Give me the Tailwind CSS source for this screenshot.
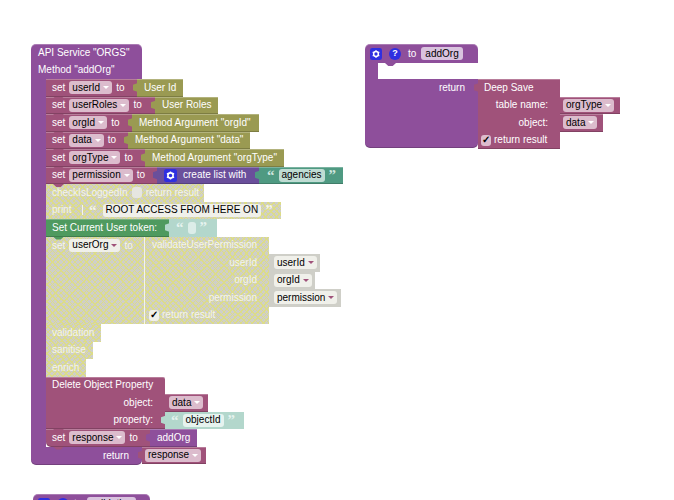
<!DOCTYPE html>
<html lang="en">
<head>
    <meta charset="UTF-8">
    <meta name="viewport" content="width=device-width, initial-scale=1.0">
    <title>Blocks</title>
    <script src="https://cdn.jsdelivr.net/npm/@tailwindcss/browser@4"></script>
</head>
<body class="bg-white">
<div class="relative w-[674px] h-[500px] overflow-hidden font-['Liberation_Sans',Arial,sans-serif] text-[10px] leading-none text-white whitespace-nowrap">

    <!-- API service block -->
    <div class="absolute left-[31px] top-[44px] w-[176px]">
        <div class="w-[111px] h-[35px] bg-[#8e4f9b] rounded-t-[5px] pl-[7px] flex flex-col shadow-[inset_0_1px_0_#ffffff40]">
            <div class="h-[17.5px] flex items-center">API Service "ORGS"</div>
            <div class="h-[17.5px] flex items-center">Method "addOrg"</div>
        </div>
        <div class="flex">
            <div class="w-[15px] shrink-0 bg-[#8e4f9b]"></div>
            <div class="flex flex-col">

                <!-- set userId -->
                <div class="flex h-[17.5px]">
                    <div class="relative w-[91px] flex items-center gap-[4px] pl-[6px] bg-[#a0527a] shadow-[inset_0_1px_0_#ffffff40,inset_0_-1px_0_#00000030]">
                        <span>set</span>
                        <span class="flex items-center gap-[3px] h-[13px] px-[3px] rounded-[3px] bg-[#dcbccd] text-black">userId<i class="w-0 h-0 border-x-[3px] border-t-[3px] border-x-transparent border-t-white"></i></span>
                        <span>to</span>
                        <i class="absolute left-[7px] top-full z-10 w-[11px] h-[3px] bg-[#a0527a] [clip-path:polygon(0_0,100%_0,70%_100%,30%_100%)]"></i>
                    </div>
                    <div class="relative w-[46px] flex items-center pl-[7px] bg-[#9a9a52] shadow-[inset_0_1px_0_#ffffff40,inset_0_-1px_0_#00000030]">
                        User Id
                        <i class="absolute -left-[4px] top-[4px] w-[5px] h-[9px] bg-[#9a9a52] [clip-path:polygon(0_20%,100%_0,100%_100%,0_80%)]"></i>
                    </div>
                </div>
                <!-- set userRoles -->
                <div class="flex h-[17.5px]">
                    <div class="relative w-[109px] flex items-center gap-[4px] pl-[6px] bg-[#a0527a] shadow-[inset_0_1px_0_#ffffff40,inset_0_-1px_0_#00000030]">
                        <span>set</span>
                        <span class="flex items-center gap-[3px] h-[13px] px-[3px] rounded-[3px] bg-[#dcbccd] text-black">userRoles<i class="w-0 h-0 border-x-[3px] border-t-[3px] border-x-transparent border-t-white"></i></span>
                        <span>to</span>
                        <i class="absolute left-[7px] top-full z-10 w-[11px] h-[3px] bg-[#a0527a] [clip-path:polygon(0_0,100%_0,70%_100%,30%_100%)]"></i>
                    </div>
                    <div class="relative w-[63px] flex items-center pl-[7px] bg-[#9a9a52] shadow-[inset_0_1px_0_#ffffff40,inset_0_-1px_0_#00000030]">
                        User Roles
                        <i class="absolute -left-[4px] top-[4px] w-[5px] h-[9px] bg-[#9a9a52] [clip-path:polygon(0_20%,100%_0,100%_100%,0_80%)]"></i>
                    </div>
                </div>
                <!-- set orgId -->
                <div class="flex h-[17.5px]">
                    <div class="relative w-[86px] flex items-center gap-[4px] pl-[6px] bg-[#a0527a] shadow-[inset_0_1px_0_#ffffff40,inset_0_-1px_0_#00000030]">
                        <span>set</span>
                        <span class="flex items-center gap-[3px] h-[13px] px-[3px] rounded-[3px] bg-[#dcbccd] text-black">orgId<i class="w-0 h-0 border-x-[3px] border-t-[3px] border-x-transparent border-t-white"></i></span>
                        <span>to</span>
                        <i class="absolute left-[7px] top-full z-10 w-[11px] h-[3px] bg-[#a0527a] [clip-path:polygon(0_0,100%_0,70%_100%,30%_100%)]"></i>
                    </div>
                    <div class="relative w-[127px] flex items-center pl-[7px] bg-[#9a9a52] shadow-[inset_0_1px_0_#ffffff40,inset_0_-1px_0_#00000030]">
                        Method Argument "orgId"
                        <i class="absolute -left-[4px] top-[4px] w-[5px] h-[9px] bg-[#9a9a52] [clip-path:polygon(0_20%,100%_0,100%_100%,0_80%)]"></i>
                    </div>
                </div>
                <!-- set data -->
                <div class="flex h-[17.5px]">
                    <div class="relative w-[82px] flex items-center gap-[4px] pl-[6px] bg-[#a0527a] shadow-[inset_0_1px_0_#ffffff40,inset_0_-1px_0_#00000030]">
                        <span>set</span>
                        <span class="flex items-center gap-[3px] h-[13px] px-[3px] rounded-[3px] bg-[#dcbccd] text-black">data<i class="w-0 h-0 border-x-[3px] border-t-[3px] border-x-transparent border-t-white"></i></span>
                        <span>to</span>
                        <i class="absolute left-[7px] top-full z-10 w-[11px] h-[3px] bg-[#a0527a] [clip-path:polygon(0_0,100%_0,70%_100%,30%_100%)]"></i>
                    </div>
                    <div class="relative w-[122px] flex items-center pl-[7px] bg-[#9a9a52] shadow-[inset_0_1px_0_#ffffff40,inset_0_-1px_0_#00000030]">
                        Method Argument "data"
                        <i class="absolute -left-[4px] top-[4px] w-[5px] h-[9px] bg-[#9a9a52] [clip-path:polygon(0_20%,100%_0,100%_100%,0_80%)]"></i>
                    </div>
                </div>
                <!-- set orgType -->
                <div class="flex h-[17.5px]">
                    <div class="relative w-[99px] flex items-center gap-[4px] pl-[6px] bg-[#a0527a] shadow-[inset_0_1px_0_#ffffff40,inset_0_-1px_0_#00000030]">
                        <span>set</span>
                        <span class="flex items-center gap-[3px] h-[13px] px-[3px] rounded-[3px] bg-[#dcbccd] text-black">orgType<i class="w-0 h-0 border-x-[3px] border-t-[3px] border-x-transparent border-t-white"></i></span>
                        <span>to</span>
                        <i class="absolute left-[7px] top-full z-10 w-[11px] h-[3px] bg-[#a0527a] [clip-path:polygon(0_0,100%_0,70%_100%,30%_100%)]"></i>
                    </div>
                    <div class="relative w-[139px] flex items-center pl-[7px] bg-[#9a9a52] shadow-[inset_0_1px_0_#ffffff40,inset_0_-1px_0_#00000030]">
                        Method Argument "orgType"
                        <i class="absolute -left-[4px] top-[4px] w-[5px] h-[9px] bg-[#9a9a52] [clip-path:polygon(0_20%,100%_0,100%_100%,0_80%)]"></i>
                    </div>
                </div>
                <!-- set permission -->
                <div class="flex h-[17.5px]">
                    <div class="relative w-[111px] flex items-center gap-[4px] pl-[6px] bg-[#a0527a] shadow-[inset_0_1px_0_#ffffff40,inset_0_-1px_0_#00000030]">
                        <span>set</span>
                        <span class="flex items-center gap-[3px] h-[13px] px-[3px] rounded-[3px] bg-[#dcbccd] text-black">permission<i class="w-0 h-0 border-x-[3px] border-t-[3px] border-x-transparent border-t-white"></i></span>
                        <span>to</span>
                        <i class="absolute left-[7px] top-full z-10 w-[11px] h-[3px] bg-[#a0527a] [clip-path:polygon(0_0,100%_0,70%_100%,30%_100%)]"></i>
                    </div>
                    <div class="relative w-[102px] flex items-center gap-[6px] pl-[7px] bg-[#6a4f9b] shadow-[inset_0_1px_0_#ffffff40,inset_0_-1px_0_#00000030]">
                        <svg width="13" height="13" viewBox="0 0 13 13" class="shrink-0"><rect width="13" height="13" rx="2.5" fill="#2f2fe0"/><circle cx="6.5" cy="6.5" r="2.6" fill="none" stroke="#fff" stroke-width="1.6"/><path d="M6.5 2.4v1.4M6.5 9.2v1.4M2.9 4.4l1.2.7M8.9 7.9l1.2.7M2.9 8.6l1.2-.7M8.9 5.1l1.2-.7" stroke="#fff" stroke-width="1.4"/></svg>
                        create list with
                        <i class="absolute -left-[4px] top-[4px] w-[5px] h-[9px] bg-[#6a4f9b] [clip-path:polygon(0_20%,100%_0,100%_100%,0_80%)]"></i>
                    </div>
                    <div class="relative w-[84px] flex items-center gap-[4px] pl-[8px] bg-[#4f9a82] shadow-[inset_0_1px_0_#ffffff40,inset_0_-1px_0_#00000030]">
                        <span class="font-['Liberation_Serif',serif] font-bold text-[15px] leading-[9px] h-[9px] text-[#cfe6df]">“</span>
                        <span class="flex items-center h-[13px] px-[3px] rounded-[3px] bg-[#bfdcd3] text-black">agencies</span>
                        <span class="font-['Liberation_Serif',serif] font-bold text-[15px] leading-[9px] h-[9px] text-[#cfe6df]">”</span>
                        <i class="absolute -left-[4px] top-[4px] w-[5px] h-[9px] bg-[#4f9a82] [clip-path:polygon(0_20%,100%_0,100%_100%,0_80%)]"></i>
                    </div>
                </div>
                <!-- checkIsLoggedIn (disabled) -->
                <div class="flex h-[17.5px]">
                    <div class="w-[158px] flex items-center gap-[4px] pl-[6px] text-[#f4f4ec] bg-[#cfcfc8] bg-[repeating-linear-gradient(45deg,#dcdc88_0,#dcdc88_1px,transparent_1px,transparent_4px),repeating-linear-gradient(-45deg,#dcdc88_0,#dcdc88_1px,transparent_1px,transparent_4px)]">
                        <span>checkIsLoggedIn</span>
                        <span class="w-[10px] h-[11px] rounded-[3px] bg-[#e6e6e0]"></span>
                        <span>return result</span>
                    </div>
                </div>
                <!-- print (disabled) -->
                <div class="flex h-[17.5px]">
                    <div class="w-[235px] flex items-center pl-[6px] text-[#f4f4ec] bg-[#cfcfc8] bg-[repeating-linear-gradient(45deg,#dcdc88_0,#dcdc88_1px,transparent_1px,transparent_4px),repeating-linear-gradient(-45deg,#dcdc88_0,#dcdc88_1px,transparent_1px,transparent_4px)]">
                        <span class="w-[31px] shrink-0 border-r border-[#f4f4ec]">print</span>
                        <span class="font-['Liberation_Serif',serif] font-bold text-[15px] leading-[9px] h-[9px] ml-[6px]">“</span>
                        <span class="flex items-center h-[13px] px-[3px] ml-[6px] rounded-[3px] bg-[#f0f0ea] text-black">ROOT ACCESS FROM HERE ON</span>
                        <span class="font-['Liberation_Serif',serif] font-bold text-[15px] leading-[9px] h-[9px] ml-[4px]">”</span>
                    </div>
                </div>
                <!-- Set Current User token -->
                <div class="flex h-[17.5px]">
                    <div class="relative w-[123px] flex items-center pl-[6px] bg-[#4f9a5f] shadow-[inset_0_1px_0_#ffffff40,inset_0_-1px_0_#00000030]">
                        Set Current User token:
                        <i class="absolute left-[7px] top-full z-10 w-[11px] h-[3px] bg-[#4f9a5f] [clip-path:polygon(0_0,100%_0,70%_100%,30%_100%)]"></i>
                    </div>
                    <div class="relative w-[48px] flex items-center gap-[4px] pl-[7px] bg-[#b3d7cc]">
                        <span class="font-['Liberation_Serif',serif] font-bold text-[15px] leading-[9px] h-[9px] text-[#e6f3ef]">“</span>
                        <span class="w-[8px] h-[12px] rounded-[3px] bg-[#dcede8]"></span>
                        <span class="font-['Liberation_Serif',serif] font-bold text-[15px] leading-[9px] h-[9px] text-[#e6f3ef]">”</span>
                        <i class="absolute -left-[4px] top-[4px] w-[5px] h-[9px] bg-[#b3d7cc] [clip-path:polygon(0_20%,100%_0,100%_100%,0_80%)]"></i>
                    </div>
                </div>
                <!-- set userOrg (disabled) -->
                <div class="flex">
                    <div class="w-[99px] h-[87.5px] flex items-start gap-[4px] pt-[2px] pl-[6px] border-r border-[#f4f4ec] text-[#f4f4ec] bg-[#cfcfc8] bg-[repeating-linear-gradient(45deg,#dcdc88_0,#dcdc88_1px,transparent_1px,transparent_4px),repeating-linear-gradient(-45deg,#dcdc88_0,#dcdc88_1px,transparent_1px,transparent_4px)]">
                        <span class="leading-[13px]">set</span>
                        <span class="flex items-center gap-[3px] h-[13px] px-[3px] rounded-[3px] bg-[#f0f0ea] text-black">userOrg<i class="w-0 h-0 border-x-[3px] border-t-[3px] border-x-transparent border-t-[#a0527a]"></i></span>
                        <span class="leading-[13px]">to</span>
                    </div>
                    <div class="flex flex-col">
                        <div class="w-[124px] h-[17.5px] flex items-center pl-[7px] text-[#f4f4ec] bg-[#cfcfc8] bg-[repeating-linear-gradient(45deg,#dcdc88_0,#dcdc88_1px,transparent_1px,transparent_4px),repeating-linear-gradient(-45deg,#dcdc88_0,#dcdc88_1px,transparent_1px,transparent_4px)]">validateUserPermission</div>
                        <div class="flex h-[17.5px]">
                            <div class="w-[124px] flex items-center justify-end pr-[12px] text-[#f4f4ec] bg-[#cfcfc8] bg-[repeating-linear-gradient(45deg,#dcdc88_0,#dcdc88_1px,transparent_1px,transparent_4px),repeating-linear-gradient(-45deg,#dcdc88_0,#dcdc88_1px,transparent_1px,transparent_4px)]">userId</div>
                            <div class="w-[51px] flex items-center pl-[5px] bg-[#cfcfc8]">
                                <span class="flex items-center gap-[3px] h-[13px] px-[3px] rounded-[3px] bg-[#f0f0ea] text-black">userId<i class="w-0 h-0 border-x-[3px] border-t-[3px] border-x-transparent border-t-[#a0527a]"></i></span>
                            </div>
                        </div>
                        <div class="flex h-[17.5px]">
                            <div class="w-[124px] flex items-center justify-end pr-[12px] text-[#f4f4ec] bg-[#cfcfc8] bg-[repeating-linear-gradient(45deg,#dcdc88_0,#dcdc88_1px,transparent_1px,transparent_4px),repeating-linear-gradient(-45deg,#dcdc88_0,#dcdc88_1px,transparent_1px,transparent_4px)]">orgId</div>
                            <div class="w-[46px] flex items-center pl-[5px] bg-[#cfcfc8]">
                                <span class="flex items-center gap-[3px] h-[13px] px-[3px] rounded-[3px] bg-[#f0f0ea] text-black">orgId<i class="w-0 h-0 border-x-[3px] border-t-[3px] border-x-transparent border-t-[#a0527a]"></i></span>
                            </div>
                        </div>
                        <div class="flex h-[17.5px]">
                            <div class="w-[124px] flex items-center justify-end pr-[12px] text-[#f4f4ec] bg-[#cfcfc8] bg-[repeating-linear-gradient(45deg,#dcdc88_0,#dcdc88_1px,transparent_1px,transparent_4px),repeating-linear-gradient(-45deg,#dcdc88_0,#dcdc88_1px,transparent_1px,transparent_4px)]">permission</div>
                            <div class="w-[72px] flex items-center pl-[5px] bg-[#cfcfc8]">
                                <span class="flex items-center gap-[3px] h-[13px] px-[3px] rounded-[3px] bg-[#f0f0ea] text-black">permission<i class="w-0 h-0 border-x-[3px] border-t-[3px] border-x-transparent border-t-[#a0527a]"></i></span>
                            </div>
                        </div>
                        <div class="w-[124px] h-[17.5px] flex items-center gap-[3px] pl-[4px] text-[#f4f4ec] bg-[#cfcfc8] bg-[repeating-linear-gradient(45deg,#dcdc88_0,#dcdc88_1px,transparent_1px,transparent_4px),repeating-linear-gradient(-45deg,#dcdc88_0,#dcdc88_1px,transparent_1px,transparent_4px)]">
                            <span class="w-[10px] h-[11px] flex items-center justify-center rounded-[3px] bg-[#f0f0ea] text-black font-bold">✓</span>
                            return result
                        </div>
                    </div>
                </div>
                <!-- validation, sanitise, enrich (disabled) -->
                <div class="w-[55px] h-[17.5px] flex items-center pl-[6px] text-[#f4f4ec] bg-[#cfcfc8] bg-[repeating-linear-gradient(45deg,#dcdc88_0,#dcdc88_1px,transparent_1px,transparent_4px),repeating-linear-gradient(-45deg,#dcdc88_0,#dcdc88_1px,transparent_1px,transparent_4px)]">validation</div>
                <div class="w-[47px] h-[17.5px] flex items-center pl-[6px] text-[#f4f4ec] bg-[#cfcfc8] bg-[repeating-linear-gradient(45deg,#dcdc88_0,#dcdc88_1px,transparent_1px,transparent_4px),repeating-linear-gradient(-45deg,#dcdc88_0,#dcdc88_1px,transparent_1px,transparent_4px)]">sanitise</div>
                <div class="w-[40px] h-[17.5px] flex items-center pl-[6px] text-[#f4f4ec] bg-[#cfcfc8] bg-[repeating-linear-gradient(45deg,#dcdc88_0,#dcdc88_1px,transparent_1px,transparent_4px),repeating-linear-gradient(-45deg,#dcdc88_0,#dcdc88_1px,transparent_1px,transparent_4px)]">enrich</div>
                <!-- Delete Object Property -->
                <div class="flex">
                    <div class="relative w-[119px] h-[52.5px] flex flex-col bg-[#a0527a] rounded-tr-[2px] shadow-[inset_0_1px_0_#ffffff40,inset_0_-1px_0_#00000030]">
                        <div class="h-[17.5px] flex items-center pl-[6px]">Delete Object Property</div>
                        <div class="h-[17.5px] flex items-center justify-end pr-[12px]">object:</div>
                        <div class="h-[17.5px] flex items-center justify-end pr-[12px]">property:</div>
                        <i class="absolute left-[7px] top-full z-10 w-[11px] h-[3px] bg-[#a0527a] [clip-path:polygon(0_0,100%_0,70%_100%,30%_100%)]"></i>
                    </div>
                    <div class="flex flex-col pt-[17.5px]">
                        <div class="relative w-[43px] h-[17.5px] flex items-center pl-[4px] bg-[#a0527a] shadow-[inset_0_1px_0_#ffffff40,inset_0_-1px_0_#00000030]">
                            <span class="flex items-center gap-[3px] h-[13px] px-[3px] rounded-[3px] bg-[#dcbccd] text-black">data<i class="w-0 h-0 border-x-[3px] border-t-[3px] border-x-transparent border-t-white"></i></span>
                        </div>
                        <div class="relative w-[79px] h-[17.5px] flex items-center gap-[4px] pl-[6px] bg-[#b3d7cc]">
                            <span class="font-['Liberation_Serif',serif] font-bold text-[15px] leading-[9px] h-[9px] text-[#e6f3ef]">“</span>
                            <span class="flex items-center h-[13px] px-[3px] rounded-[3px] bg-[#e6f3ef] text-black">objectId</span>
                            <span class="font-['Liberation_Serif',serif] font-bold text-[15px] leading-[9px] h-[9px] text-[#e6f3ef]">”</span>
                            <i class="absolute -left-[4px] top-[4px] w-[5px] h-[9px] bg-[#b3d7cc] [clip-path:polygon(0_20%,100%_0,100%_100%,0_80%)]"></i>
                        </div>
                    </div>
                </div>
                <!-- set response -->
                <div class="flex h-[17.5px]">
                    <div class="relative w-[104px] flex items-center gap-[4px] pl-[6px] bg-[#a0527a] rounded-bl-[5px] shadow-[inset_0_1px_0_#ffffff40,inset_0_-1px_0_#00000030]">
                        <span>set</span>
                        <span class="flex items-center gap-[3px] h-[13px] px-[3px] rounded-[3px] bg-[#dcbccd] text-black">response<i class="w-0 h-0 border-x-[3px] border-t-[3px] border-x-transparent border-t-white"></i></span>
                        <span>to</span>
                        <i class="absolute left-[7px] top-full z-10 w-[11px] h-[3px] bg-[#a0527a] [clip-path:polygon(0_0,100%_0,70%_100%,30%_100%)]"></i>
                    </div>
                    <div class="relative w-[47px] flex items-center pl-[7px] bg-[#8e4f9b] shadow-[inset_0_1px_0_#ffffff40,inset_0_-1px_0_#00000030]">
                        addOrg
                        <i class="absolute -left-[4px] top-[4px] w-[5px] h-[9px] bg-[#8e4f9b] [clip-path:polygon(0_20%,100%_0,100%_100%,0_80%)]"></i>
                    </div>
                </div>
            </div>
        </div>
        <!-- return -->
        <div class="flex h-[18.5px]">
            <div class="w-[111px] flex items-center justify-end pr-[13px] bg-[#8e4f9b] rounded-b-[5px] shadow-[inset_0_-1px_0_#00000030]">return</div>
            <div class="relative w-[64px] h-[17.5px] flex items-center pl-[3px] bg-[#a0527a] shadow-[inset_0_1px_0_#ffffff40,inset_0_-1px_0_#00000030]">
                <span class="flex items-center gap-[3px] h-[13px] px-[3px] rounded-[3px] bg-[#dcbccd] text-black">response<i class="w-0 h-0 border-x-[3px] border-t-[3px] border-x-transparent border-t-white"></i></span>
                <i class="absolute -left-[4px] top-[4px] w-[5px] h-[9px] bg-[#a0527a] [clip-path:polygon(0_20%,100%_0,100%_100%,0_80%)]"></i>
            </div>
        </div>
    </div>

    <!-- addOrg function block -->
    <div class="absolute left-[365px] top-[44px] w-[255px]">
        <div class="w-[113px] h-[19px] flex items-center gap-[5px] pl-[5px] bg-[#8e4f9b] rounded-t-[5px] shadow-[inset_0_1px_0_#ffffff40]">
            <svg width="12" height="12" viewBox="0 0 13 13" class="shrink-0"><rect width="13" height="13" rx="2.5" fill="#2f2fe0"/><circle cx="6.5" cy="6.5" r="2.6" fill="none" stroke="#fff" stroke-width="1.6"/><path d="M6.5 2.4v1.4M6.5 9.2v1.4M2.9 4.4l1.2.7M8.9 7.9l1.2.7M2.9 8.6l1.2-.7M8.9 5.1l1.2-.7" stroke="#fff" stroke-width="1.4"/></svg>
            <span class="w-[12px] h-[12px] ml-[2px] shrink-0 rounded-full bg-[#2f2fe0] flex items-center justify-center text-[9px] font-bold">?</span>
            <span class="ml-[2px]">to</span>
            <span class="flex items-center h-[13px] px-[4px] rounded-[3px] bg-[#d9c3de] text-black">addOrg</span>
        </div>
        <div class="flex h-[16px]">
            <div class="w-[13px] bg-[#8e4f9b]"></div>
            <div class="relative flex-1 bg-white rounded-l-[5px]">
                <i class="absolute left-[7px] top-0 w-[11px] h-[3px] bg-[#8e4f9b] [clip-path:polygon(0_0,100%_0,70%_100%,30%_100%)]"></i>
            </div>
        </div>
        <div class="flex">
            <div class="w-[113px] h-[69px] flex items-start justify-end pt-[2px] pr-[13px] bg-[#8e4f9b] rounded-b-[5px] leading-[13px] shadow-[inset_0_-1px_0_#00000030]">return</div>
            <div class="relative w-[82px] h-[69.5px] flex flex-col bg-[#a0527a] shadow-[inset_0_1px_0_#ffffff40,inset_0_-1px_0_#00000030]">
                <div class="h-[17.5px] flex items-center pl-[6px]">Deep Save</div>
                <div class="h-[17.5px] flex items-center justify-end pr-[12px]">table name:</div>
                <div class="h-[17.5px] flex items-center justify-end pr-[12px]">object:</div>
                <div class="h-[17px] flex items-center gap-[3px] pl-[3px]">
                    <span class="w-[10px] h-[11px] flex items-center justify-center rounded-[3px] bg-[#dcbccd] text-black font-bold">✓</span>
                    return result
                </div>
                <i class="absolute -left-[4px] top-[4px] w-[5px] h-[9px] bg-[#a0527a] [clip-path:polygon(0_20%,100%_0,100%_100%,0_80%)]"></i>
            </div>
            <div class="flex flex-col pt-[17.5px]">
                <div class="w-[60px] h-[17.5px] flex items-center pl-[3px] bg-[#a0527a] shadow-[inset_0_1px_0_#ffffff40,inset_0_-1px_0_#00000030]">
                    <span class="flex items-center gap-[3px] h-[13px] px-[3px] rounded-[3px] bg-[#dcbccd] text-black">orgType<i class="w-0 h-0 border-x-[3px] border-t-[3px] border-x-transparent border-t-white"></i></span>
                </div>
                <div class="w-[43px] h-[17.5px] flex items-center pl-[3px] bg-[#a0527a] shadow-[inset_0_1px_0_#ffffff40,inset_0_-1px_0_#00000030]">
                    <span class="flex items-center gap-[3px] h-[13px] px-[3px] rounded-[3px] bg-[#dcbccd] text-black">data<i class="w-0 h-0 border-x-[3px] border-t-[3px] border-x-transparent border-t-white"></i></span>
                </div>
            </div>
        </div>
    </div>

    <!-- validation function block, cut off by the window -->
    <div class="absolute left-[33px] top-[494px] w-[117px] h-[19px] flex items-center gap-[5px] pl-[5px] bg-[#8e4f9b] rounded-t-[5px] shadow-[inset_0_1px_0_#ffffff40]">
        <svg width="12" height="12" viewBox="0 0 13 13" class="shrink-0"><rect width="13" height="13" rx="2.5" fill="#2f2fe0"/><circle cx="6.5" cy="6.5" r="2.6" fill="none" stroke="#fff" stroke-width="1.6"/></svg>
        <span class="w-[12px] h-[12px] ml-[2px] shrink-0 rounded-full bg-[#2f2fe0] flex items-center justify-center text-[9px] font-bold">?</span>
        <span>to</span>
        <span class="flex items-center h-[13px] px-[3px] rounded-[3px] bg-[#d9c3de] text-black">validation</span>
    </div>
</div>
</body>
</html>
